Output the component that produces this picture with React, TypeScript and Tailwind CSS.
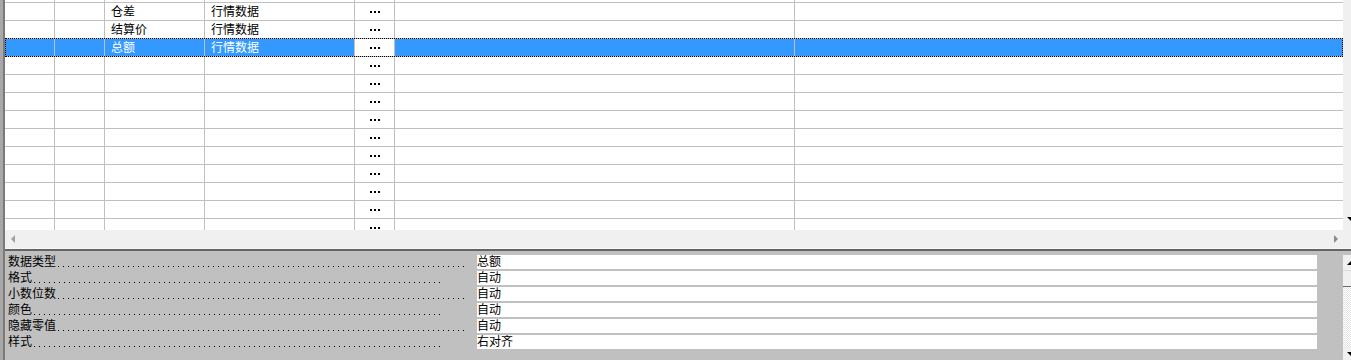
import React from "react";

const FONT = { fontFamily: '"Liberation Sans", "Noto Sans CJK SC", sans-serif' } as React.CSSProperties;

type Row = { a?: string; b?: string; sel?: boolean };

const rows: Row[] = [
  {},
  { a: "仓差", b: "行情数据" },
  { a: "结算价", b: "行情数据" },
  { a: "总额", b: "行情数据", sel: true },
  {}, {}, {}, {}, {}, {}, {}, {}, {}, {},
];

function Ellipsis() {
  return (
    <div className="flex gap-[2px]">
      <div className="w-[2px] h-[2px] bg-black" />
      <div className="w-[2px] h-[2px] bg-black" />
      <div className="w-[2px] h-[2px] bg-black" />
    </div>
  );
}

function GridRow({ r }: { r: Row }) {
  const bg = r.sel ? "bg-[#3399ff] text-white" : "bg-white text-black";
  const cell = "h-[18px] border-r border-b border-[#c0c0c0] shrink-0 flex items-center overflow-hidden whitespace-nowrap";
  return (
    <div className="relative flex">
      <div className={`${cell} ${bg} w-[50px]`} />
      <div className={`${cell} ${bg} w-[50px]`} />
      <div className={`${cell} ${bg} w-[100px] pl-[6px] text-[12px] leading-[18px]`}>{r.a}</div>
      <div className={`${cell} ${bg} w-[150px] pl-[6px] text-[12px] leading-[18px]`}>{r.b}</div>
      <div className={`${cell} bg-white w-[40px] justify-center pl-[1px]`}>
        <Ellipsis />
      </div>
      <div className={`${cell} ${bg} w-[400px]`} />
      <div className={`h-[18px] border-b border-[#c0c0c0] ${bg} w-[548px] shrink-0`} />
      {r.sel && (
        <div className="absolute left-0 top-[-1px] w-[1338px] h-[19px] border border-dotted border-black pointer-events-none" />
      )}
    </div>
  );
}

const props = [
  { k: "数据类型", v: "总额" },
  { k: "格式", v: "自动" },
  { k: "小数位数", v: "自动" },
  { k: "颜色", v: "自动" },
  { k: "隐藏零值", v: "自动" },
  { k: "样式", v: "右对齐" },
];

export default function App() {
  return (
    <div className="w-[1351px] h-[360px] overflow-hidden flex bg-[#c0c0c0] text-[12px]" style={FONT}>
      <div className="w-[3px] h-full bg-[#a8a8a8] shrink-0" />
      <div className="w-[2px] h-full bg-[#7a7a7a] shrink-0" />
      <div className="flex-1 flex flex-col min-w-0">
        {/* top grid */}
        <div className="h-[230px] flex overflow-hidden shrink-0">
          <div className="w-[1338px] shrink-0 overflow-hidden bg-white">
            <div className="mt-[-15px]">
              {rows.map((r, i) => (
                <GridRow key={i} r={r} />
              ))}
            </div>
          </div>
          <div className="flex-1 bg-[#f0f0f0] flex flex-col justify-end pb-[9px] pl-[4px]">
            <div className="w-0 h-0 border-l-[4px] border-r-[4px] border-t-[4px] border-l-transparent border-r-transparent border-t-black" />
          </div>
        </div>
        {/* horizontal scrollbar */}
        <div className="h-[18px] flex shrink-0">
          <div className="w-[1338px] shrink-0 bg-[#f0f0f0] flex items-center justify-between pl-[6px] pr-[5px]">
            <div className="w-0 h-0 border-t-[4px] border-b-[4px] border-r-[4px] border-t-transparent border-b-transparent border-r-[#a0a0a0]" />
            <div className="w-0 h-0 border-t-[4px] border-b-[4px] border-l-[4px] border-t-transparent border-b-transparent border-l-[#8a8a8a]" />
          </div>
          <div className="flex-1 bg-[#f0f0f0]" />
        </div>
        <div className="h-[1px] bg-[#f8f8f8] shrink-0" />
        <div className="h-[2px] bg-[#646464] shrink-0" />
        {/* bottom panel */}
        <div className="flex-1 flex bg-[#c0c0c0]">
          <div className="w-[1338px] shrink-0 pt-[3px] pl-[3px]">
            {props.map((p, i) => (
              <div key={i} className="flex h-[16px] leading-[16px] text-black">
                <div className="w-[469px] shrink-0 whitespace-nowrap overflow-hidden flex">
                  <span>{p.k}</span>
                  <span className="w-[407px] h-[1px] mt-[12px] ml-[2px] shrink-0 bg-[linear-gradient(to_right,#000_1px,transparent_1px)] bg-[length:5px_1px]" />
                </div>
                <div className="w-[840px] h-[14px] my-[1px] bg-white leading-[14px] whitespace-nowrap">{p.v}</div>
              </div>
            ))}
          </div>
          <div className="flex-1 flex flex-col pt-[4px]">
            <div className="h-[15px] bg-[#f0f0f0] flex items-center pl-[4px]">
              <div className="w-0 h-0 border-l-[4px] border-r-[4px] border-b-[4px] border-l-transparent border-r-transparent border-b-black" />
            </div>
            <div className="h-[17px] bg-[#f0f0f0] border-t border-b border-[#dcdcdc] border-b-[#6a6a6a]" />
            <div className="flex-1 bg-[repeating-conic-gradient(#ffffff_0_25%,#e4e4e4_0_50%)] bg-[length:2px_2px]" />
            <div className="h-[13px] bg-[#f0f0f0] flex items-end pb-[4px] pl-[4px]">
              <div className="w-0 h-0 border-l-[4px] border-r-[4px] border-t-[4px] border-l-transparent border-r-transparent border-t-black" />
            </div>
          </div>
        </div>
      </div>
    </div>
  );
}
